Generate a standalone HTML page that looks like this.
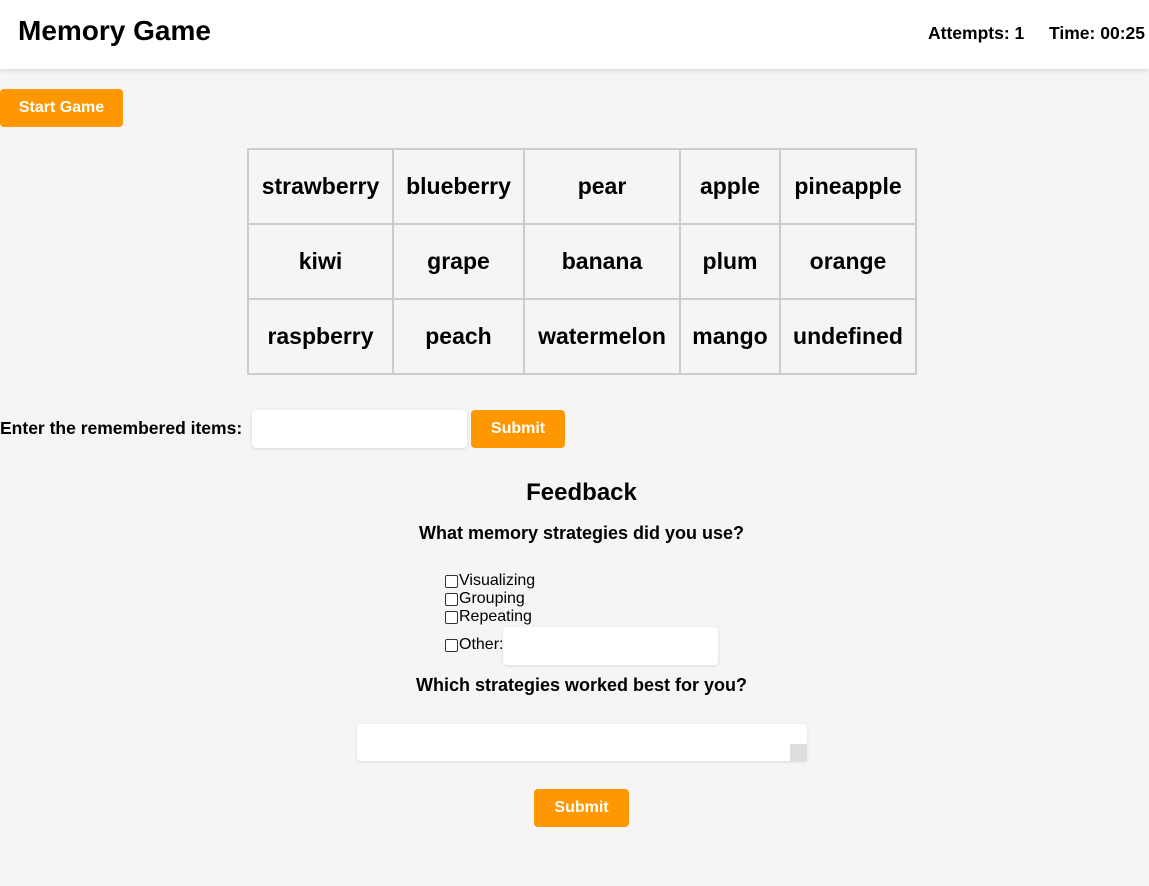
<!DOCTYPE html>
<html><head><style>
body{margin:0;background:#f5f5f5;font-family:"Liberation Sans",Arial,sans-serif;width:1149px;height:886px;overflow:hidden;position:relative}
.a{position:absolute}
header{position:absolute;left:0;top:0;width:1149px;height:69px;background:#fff;box-shadow:0 2px 4px rgba(0,0,0,0.1)}
.btn{position:absolute;background:#ff9800;color:#fff;font-weight:bold;font-size:16px;border-radius:4px;display:flex;align-items:center;justify-content:center}
.inp{position:absolute;background:#fff;border-radius:4px;box-shadow:0 1px 3px rgba(0,0,0,0.12)}
table{position:absolute;left:247px;top:148px;border-collapse:collapse;table-layout:fixed;width:668px}
td{border:2px solid #ccc;height:73px;padding:0;text-align:center;font-weight:bold;font-size:23px;white-space:nowrap}
.cb{position:absolute;left:445px;font-size:16px;display:flex;align-items:center}
.cb i{display:inline-block;width:11px;height:11px;border:1px solid #333;border-radius:2px;background:#fff;margin-right:1px}
.c{position:absolute;left:0;width:1163px;text-align:center;font-weight:bold}
</style></head><body>
<header>
<div class="a" style="left:18px;top:15px;font-size:28px;font-weight:bold">Memory Game</div>
<div class="a" style="left:928px;top:23px;font-size:17.5px;font-weight:bold">Attempts: 1</div>
<div class="a" style="right:4px;top:23px;font-size:17.5px;font-weight:bold">Time: 00:25</div>
</header>
<div class="btn" style="left:0;top:89px;width:123px;height:38px">Start Game</div>
<table>
<col style="width:145px"><col style="width:131px"><col style="width:156px"><col style="width:100px"><col style="width:136px">
<tr><td>strawberry</td><td>blueberry</td><td>pear</td><td>apple</td><td>pineapple</td></tr>
<tr><td>kiwi</td><td>grape</td><td>banana</td><td>plum</td><td>orange</td></tr>
<tr><td>raspberry</td><td>peach</td><td>watermelon</td><td>mango</td><td>undefined</td></tr>
</table>
<div class="a" style="left:0;top:418px;font-size:17.5px;font-weight:bold">Enter the remembered items:</div>
<div class="inp" style="left:252px;top:410px;width:215px;height:38px"></div>
<div class="btn" style="left:471px;top:410px;width:94px;height:38px">Submit</div>
<div class="c" style="top:479px;font-size:24px">Feedback</div>
<div class="c" style="top:523px;font-size:18px">What memory strategies did you use?</div>
<div class="cb" style="top:572px"><i></i>Visualizing</div>
<div class="cb" style="top:590px"><i></i>Grouping</div>
<div class="cb" style="top:608px"><i></i>Repeating</div>
<div class="cb" style="top:636px"><i></i>Other:</div>
<div class="inp" style="left:503px;top:627px;width:215px;height:38px"></div>
<div class="c" style="top:675px;font-size:18px">Which strategies worked best for you?</div>
<div class="inp" style="left:357px;top:724px;width:450px;height:37px"></div>
<div class="a" style="left:790px;top:744px;width:17px;height:17px;background:#ddd"></div>
<div class="btn" style="left:534px;top:789px;width:95px;height:38px">Submit</div>
</body></html>
